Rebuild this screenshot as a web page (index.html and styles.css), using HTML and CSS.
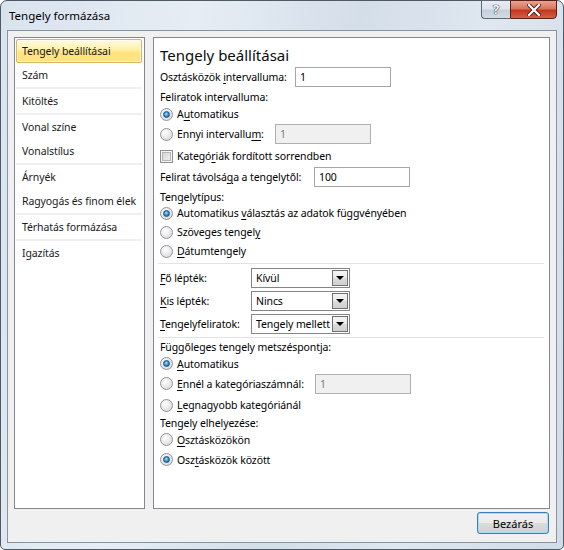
FILE: index.html
```html
<!DOCTYPE html>
<html lang="hu">
<head>
<meta charset="utf-8">
<title>Tengely formázása</title>
<link rel="stylesheet" href="styles.css">
</head>
<body>
<div class="window">
  <div class="titlebar">
    <span class="title">Tengely formázása</span>
    <div class="caption-btns">
      <div class="cbtn help">?</div>
      <div class="cbtn close">
        <svg width="14" height="12" viewBox="0 0 14 12">
          <path d="M2 1 L12 11 M12 1 L2 11" stroke="#4a1a12" stroke-width="4" stroke-linecap="square"/>
          <path d="M2 1 L12 11 M12 1 L2 11" stroke="#ffffff" stroke-width="2.2" stroke-linecap="square"/>
        </svg>
      </div>
    </div>
  </div>
  <div class="client">
    <div class="panels">
      <div class="nav">
        <div class="item selected">Tengely beállításai</div>
        <div class="item">Szám</div>
        <div class="sep"></div>
        <div class="item">Kitöltés</div>
        <div class="sep"></div>
        <div class="item">Vonal színe</div>
        <div class="item">Vonalstílus</div>
        <div class="sep"></div>
        <div class="item">Árnyék</div>
        <div class="item">Ragyogás és finom élek</div>
        <div class="sep"></div>
        <div class="item">Térhatás formázása</div>
        <div class="sep"></div>
        <div class="item">Igazítás</div>
      </div>
      <div class="content">
        <div class="row h22 heading">Tengely beállításai</div>
        <div class="row h22"><span class="lbl w135">Osztásközök <u>i</u>ntervalluma:</span><div class="textbox">1</div></div>
        <div class="row h18">Feliratok intervalluma:</div>
        <div class="row h16"><span class="radio checked"></span><span>A<u>u</u>tomatikus</span></div>
        <div class="row h24"><span class="radio"></span><span class="lbl w98">Ennyi intervallu<u>m</u>:</span><div class="textbox disabled">1</div></div>
        <div class="row h20"><span class="check"></span><span>Kategó<u>r</u>iák fordított sorrendben</span></div>
        <div class="row h22"><span class="lbl w154">Felirat távolsá<u>g</u>a a tengelytől:</span><div class="textbox">100</div></div>
        <div class="row h18">Tengelytípus:</div>
        <div class="row h14"><span class="radio checked"></span><span>Automatikus <u>v</u>álasztás az adatok függvényében</span></div>
        <div class="row h24"><span class="radio"></span><span>Szöveges tengel<u>y</u></span></div>
        <div class="row h14"><span class="radio"></span><span><u>D</u>átumtengely</span></div>
        <div class="hsep first"></div>
        <div class="row h21"><span class="lbl w91"><u>F</u>ő lépték:</span><div class="combo"><span class="combo-text">Kívül</span><span class="drop"><i class="tri"></i></span></div></div>
        <div class="row h25"><span class="lbl w91"><u>K</u>is lépték:</span><div class="combo"><span class="combo-text">Nincs</span><span class="drop"><i class="tri"></i></span></div></div>
        <div class="row h21"><span class="lbl w91"><u>T</u>engelyfeliratok:</span><div class="combo"><span class="combo-text">Tengely mellett</span><span class="drop"><i class="tri"></i></span></div></div>
        <div class="hsep second"></div>
        <div class="row h18">Függőleges tengely metszéspontja:</div>
        <div class="row h15"><span class="radio checked"></span><span><u>A</u>utomatikus</span></div>
        <div class="row h25"><span class="radio"></span><span class="lbl w138"><u>E</u>nnél a kategóriaszámnál:</span><div class="textbox disabled">1</div></div>
        <div class="row h18"><span class="radio"></span><span><u>L</u>egnagyobb kategóriánál</span></div>
        <div class="row h18">Tengely elhelyezése:</div>
        <div class="row h15"><span class="radio"></span><span><u>O</u>sztásközökön</span></div>
        <div class="row h25"><span class="radio checked"></span><span>Osz<u>t</u>ásközök között</span></div>
      </div>
    </div>
    <div class="footer">
      <button class="btn">Bezárás</button>
    </div>
  </div>
</div>
</body>
</html>
```

FILE: styles.css
```css
* { box-sizing: border-box; }
html, body { margin: 0; padding: 0; background: #ffffff; }
body {
  font-family: "Noto Sans", "Open Sans", sans-serif;
  font-size: 10.5px;
  letter-spacing: -0.1px;
  color: #000;
}
u { text-decoration: underline; text-underline-offset: 2px; }

.window {
  width: 564px;
  height: 550px;
  border: 1px solid #4d5966;
  border-radius: 7px 7px 5px 5px;
  background: linear-gradient(100deg, #d9e3ee 0%, #e6edf4 30%, #d4dee9 55%, #dfe7f0 75%, #d2dce7 100%);
  padding: 0 6px 6px 6px;
  display: flex;
  flex-direction: column;
}

.titlebar {
  height: 29px;
  margin: 0 -6px;
  padding: 0 6px 0 8px;
  display: flex;
  justify-content: space-between;
  align-items: flex-start;
}
.title {
  line-height: 29px;
  font-size: 11.5px;
  letter-spacing: 0;
  color: #000;
}
.caption-btns {
  display: flex;
  margin-top: -1px;
}
.cbtn {
  height: 19px;
  border: 1px solid #5d6874;
  display: flex;
  align-items: center;
  justify-content: center;
}
.help {
  width: 29px;
  border-radius: 0 0 0 4px;
  border-right: none;
  background: linear-gradient(#e8edf3 0%, #dde4ec 45%, #c5ced9 55%, #d3dbe4 100%);
  font-weight: bold;
  font-size: 13px;
  color: #f4f6f8;
  text-shadow: 0 0 1px #3b4653, 0 0 1px #3b4653, 0 0 1px #3b4653;
  line-height: 17px;
}
.close {
  width: 47px;
  border-radius: 0 0 4px 0;
  border-color: #5a2017;
  background: linear-gradient(#e8a493 0%, #d9745d 45%, #c2371d 55%, #d2624b 100%);
}

.client {
  flex: 1;
  background: #f0f0f0;
  border: 1px solid #8a949f;
  padding: 6px 6px 0 6px;
  display: flex;
  flex-direction: column;
}

.panels {
  height: 472px;
  display: flex;
  gap: 8px;
}

.nav {
  width: 131px;
  background: #fff;
  border: 1px solid #828790;
  padding: 1px 2px 1px 1px;
  display: flex;
  flex-direction: column;
}
.item {
  height: 24px;
  line-height: 24px;
  padding-left: 6px;
  white-space: nowrap;
  color: #1a1a1a;
}
.item.selected {
  border: 1px solid #dcb65a;
  border-radius: 2px;
  padding-left: 5px;
  line-height: 22px;
  background: linear-gradient(#fffbe2 0%, #fff2b0 40%, #ffe27a 60%, #ffe58a 100%);
  box-shadow: inset 0 0 0 1px rgba(255,255,255,0.55);
}
.nav .sep {
  height: 2px;
  background: #eef0f3;
}

.content {
  flex: 1;
  background: #fff;
  border: 1px solid #828790;
  padding: 6px 5px 0 6px;
  display: flex;
  flex-direction: column;
}
.row {
  display: flex;
  align-items: center;
  white-space: nowrap;
  line-height: 14px;
}
.h14 { height: 14px; }
.h15 { height: 15px; }
.h16 { height: 16px; }
.h18 { height: 18px; }
.h20 { height: 20px; }
.h21 { height: 21px; }
.h22 { height: 22px; }
.h24 { height: 24px; }
.h25 { height: 25px; }

.heading {
  font-size: 15px;
  letter-spacing: 0;
  color: #0b0b0b;
}
.lbl { display: inline-block; }
.w91 { width: 91px; }
.w98 { width: 98px; }
.w135 { width: 135px; }
.w138 { width: 138px; }
.w154 { width: 154px; }

.hsep {
  height: 1px;
  background: #e2e3e5;
  margin-left: -2px;
}
.hsep.first { margin-top: 5px; margin-bottom: 3px; }
.hsep.second { margin-top: 3px; margin-bottom: 0; }

.radio {
  width: 13px;
  height: 13px;
  border-radius: 50%;
  border: 1px solid #8f9497;
  background: radial-gradient(circle at 40% 35%, #ffffff 0%, #eeeeee 40%, #d0d0d0 100%);
  margin-right: 4px;
  flex-shrink: 0;
  display: flex;
  align-items: center;
  justify-content: center;
}
.radio.checked::after {
  content: "";
  width: 7px;
  height: 7px;
  border-radius: 50%;
  background: radial-gradient(circle at 45% 40%, #a8e0ff 0%, #3a9ae0 45%, #0d4f8a 100%);
  border: 1px solid #1b4f7c;
  box-sizing: border-box;
}

.check {
  width: 13px;
  height: 13px;
  border: 1px solid #8e8f8f;
  background: linear-gradient(135deg, #d2d2d2 0%, #f2f2f2 100%);
  box-shadow: inset 0 0 0 1px #f4f4f4, inset 0 0 0 2px #b5b5b5;
  margin-right: 4px;
  flex-shrink: 0;
}

.textbox {
  width: 96px;
  height: 20px;
  border: 1px solid #a6a6a6;
  background: #fff;
  padding-left: 4px;
  line-height: 18px;
  color: #000;
}
.textbox.disabled {
  background: #f0f0f0;
  border-color: #adb0b3;
  color: #7e7e7e;
}

.combo {
  width: 99px;
  height: 20px;
  border: 1px solid #858585;
  background: #fff;
  display: flex;
  align-items: center;
  padding: 1px;
}
.combo-text {
  flex: 1;
  padding-left: 3px;
  overflow: hidden;
}
.drop {
  width: 16px;
  height: 16px;
  border: 1px solid #707070;
  background: linear-gradient(#f4f4f4 0%, #ebebeb 50%, #dcdcdc 51%, #cfcfcf 100%);
  display: flex;
  align-items: center;
  justify-content: center;
  flex-shrink: 0;
}
.tri {
  width: 0;
  height: 0;
  border-left: 4px solid transparent;
  border-right: 4px solid transparent;
  border-top: 4px solid #000;
  margin-top: 1px;
}

.footer {
  display: flex;
  justify-content: flex-end;
  padding: 3px 1px 0 0;
}
.btn {
  width: 72px;
  height: 22px;
  font-family: inherit;
  font-size: 11px;
  letter-spacing: 0;
  color: #000;
  border: 1px solid #3c7fb1;
  border-radius: 3px;
  background: linear-gradient(#f2f2f2 0%, #ebebeb 49%, #dddddd 50%, #cfcfcf 100%);
  box-shadow: inset 0 0 0 1px #a4dbf5;
  padding: 0;
}
```
